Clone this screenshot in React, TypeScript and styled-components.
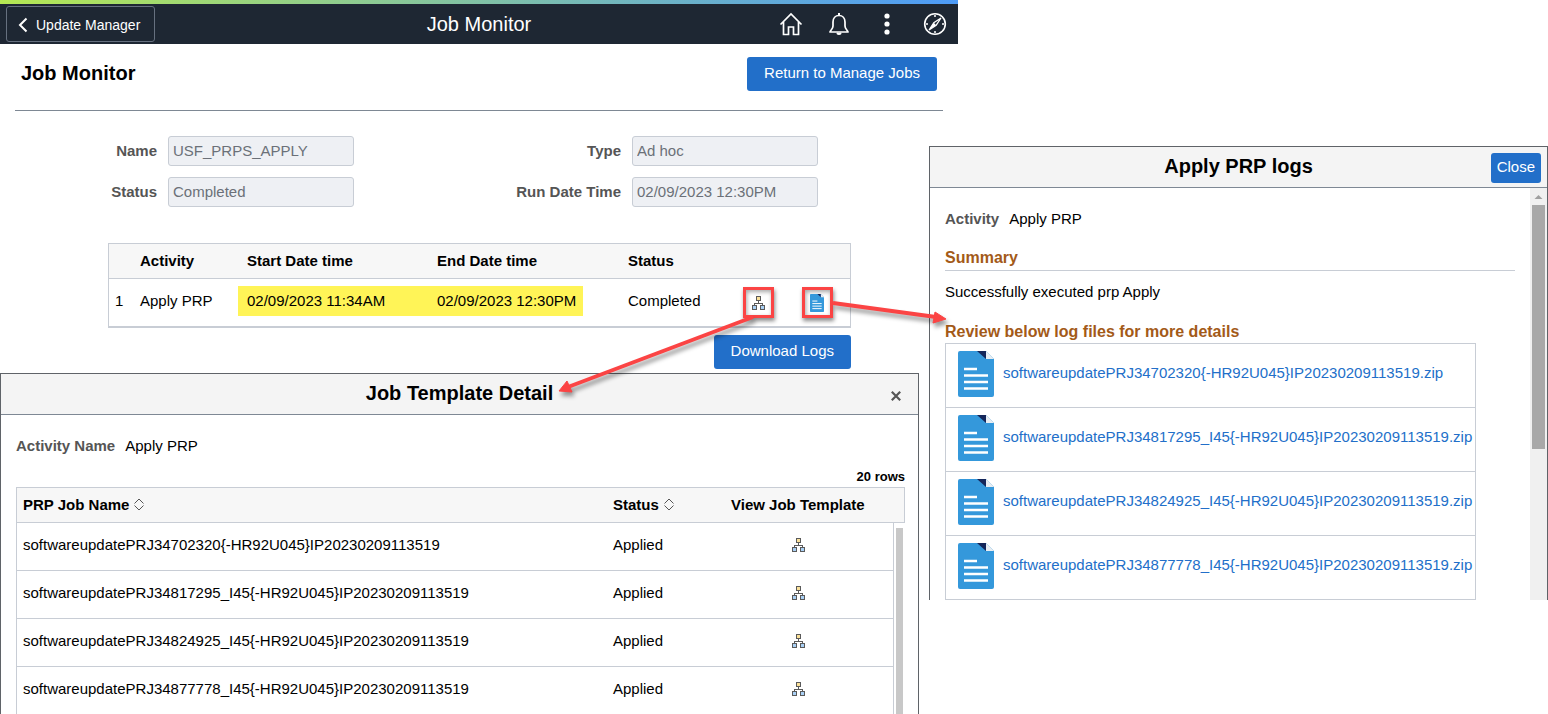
import React from 'react';
import styled, { createGlobalStyle } from 'styled-components';

const GlobalStyle = createGlobalStyle`
  *, *::before, *::after { box-sizing: border-box; }
  body {
    margin: 0;
    background: #fff;
    color: #000;
    font-family: "Liberation Sans", Arial, sans-serif;
    font-size: 15px;
    line-height: 20px;
  }
  button, input { font: inherit; }
  h1, h2, h3, p { margin: 0; }
`;

const RED = '#fb4444';

const Page = styled.div`
  display: grid;
  grid-template-columns: minmax(0, 929fr) 29px minmax(0, 590fr);
  align-items: start;
  overflow: hidden;
`;

const Main = styled.main`
  grid-row: 1;
  grid-column: 1 / 3;
`;

const Accent = styled.div`
  height: 4px;
  background: linear-gradient(90deg, #b5e853, #4d9bf8);
`;

const Banner = styled.header`
  display: grid;
  grid-template-columns: 1fr auto 1fr;
  align-items: center;
  height: 40px;
  background: #1e2733;
  color: #fff;
`;

const BackButton = styled.button`
  display: flex;
  align-items: center;
  justify-self: start;
  gap: 8px;
  height: 36px;
  margin-left: 6px;
  padding: 2px 14px 0 11px;
  border: 1px solid #66707f;
  border-radius: 3px;
  background: transparent;
  color: #fff;
  font-size: 14px;
`;

const BannerTitle = styled.h1`
  font-size: 20px;
  font-weight: 400;
  line-height: 24px;
`;

const Tools = styled.nav`
  display: flex;
  justify-content: flex-end;
`;

const ToolButton = styled.button`
  display: grid;
  place-items: center;
  width: 48px;
  height: 40px;
  padding: 0 0 0 1px;
  border: 0;
  background: transparent;
  color: #fff;
`;

const TitleRow = styled.div`
  display: flex;
  justify-content: space-between;
  align-items: flex-start;
  height: 67px;
  margin: 0 15px;
  padding: 13px 6px 0;
  border-bottom: 1px solid #7e8894;
`;

const PageTitle = styled.h2`
  font-size: 20px;
  line-height: 32px;
`;

const PrimaryButton = styled.button<{ $compact?: boolean }>`
  height: ${(p) => (p.$compact ? 30 : 34)}px;
  padding: 0 ${(p) => (p.$compact ? 6 : 17)}px 2px;
  border: 0;
  border-radius: 3px;
  background: #226fc9;
  color: #fff;
  white-space: nowrap;
`;

const Form = styled.form`
  display: grid;
  grid-template-columns: 157fr 186fr 256fr 186fr 129fr;
  gap: 11px;
  align-items: center;
  margin-top: 25px;
`;

const FieldLabel = styled.label<{ $first?: boolean }>`
  grid-column-start: ${(p) => (p.$first ? 1 : 'auto')};
  color: #555;
  font-weight: 700;
  text-align: right;
  white-space: nowrap;
`;

const Field = styled.input`
  width: 100%;
  min-width: 0;
  height: 30px;
  padding: 0 4px 1px;
  border: 1px solid #c8cdd5;
  border-radius: 3px;
  background: #eef0f4;
  color: #6b7078;
`;

const ActivityArea = styled.div`
  display: flex;
  flex-direction: column;
  align-items: flex-end;
  gap: 7px;
  margin: 36px 107px 0 108px;
`;

const ActivityTable = styled.table`
  width: 100%;
  table-layout: fixed;
  border: 1px solid #c8cdd5;
  border-bottom-width: 2px;
  border-spacing: 0;
  th, td {
    padding: 0;
    text-align: left;
    white-space: nowrap;
  }
  th {
    height: 35px;
    padding-left: 9px;
    border-bottom: 1px solid #c8cdd5;
    background: #f7f7f7;
  }
  td { height: 47px; }
  td:last-child { padding-right: 8px; }
`;

const CellText = styled.span<{ $tight?: boolean }>`
  display: block;
  padding: 0 0 4px ${(p) => (p.$tight ? 6 : 9)}px;
`;

const Highlight = styled.span<{ $end?: boolean }>`
  display: block;
  width: ${(p) => (p.$end ? '155px' : 'auto')};
  height: 30px;
  margin-bottom: 4px;
  padding-left: 9px;
  background: #fff457;
  line-height: 30px;
`;

const MarkedButton = styled.button`
  position: relative;
  display: grid;
  place-items: center;
  width: 31px;
  height: 31px;
  margin: 0 auto;
  padding: 0;
  border: 3px solid ${RED};
  background: #fff;
  box-shadow: 1px 3px 4px rgba(0, 0, 0, 0.45), inset 1px 2px 4px rgba(0, 0, 0, 0.35);
`;

const Callout = styled.svg`
  position: absolute;
  z-index: 5;
  top: -3px;
  left: -3px;
  overflow: visible;
  pointer-events: none;
  filter: drop-shadow(2px 4px 2px rgba(0, 0, 0, 0.4));
`;

const Dialog = styled.section<{ $logs?: boolean }>`
  position: relative;
  border: 1px solid #5f6368;
  border-bottom: 0;
  background: #fff;
  ${(p) => (p.$logs ? 'grid-row: 1; grid-column: 2 / 4; margin-top: 146px;' : 'margin: 4px 39px 0 0;')}
`;

const DialogHeader = styled.header`
  display: grid;
  grid-template-columns: 1fr auto 1fr;
  align-items: center;
  height: 41px;
  padding: 0 6px;
  border-bottom: 1px solid #7e8894;
  background: #f4f4f4;
`;

const DialogTitle = styled.h2`
  grid-column: 2;
  padding-bottom: 2px;
  font-size: 20px;
  line-height: 24px;
`;

const HeaderAction = styled.div`
  display: flex;
  justify-content: flex-end;
  padding-top: 2px;
`;

const IconButton = styled.button`
  display: inline-grid;
  place-items: center;
  padding: 0;
  border: 0;
  background: transparent;
  color: #555;
`;

const CloseIconButton = styled(IconButton)`
  width: 32px;
  height: 32px;
  padding-top: 2px;
`;

const TemplateBody = styled.div`
  padding: 21px 13px 0 15px;
`;

const Pair = styled.p`
  display: flex;
  gap: 10px;
`;

const PairName = styled.span`
  color: #555;
  font-weight: 700;
`;

const RowCount = styled.p`
  margin-top: 11px;
  font-size: 13px;
  font-weight: 700;
  text-align: right;
`;

const TemplateTable = styled.table`
  width: 100%;
  table-layout: fixed;
  border-spacing: 0;
  th, td {
    padding: 0 0 0 6px;
    border-bottom: 1px solid #c8cdd5;
    text-align: left;
    white-space: nowrap;
  }
  th {
    height: 36px;
    border-top: 1px solid #c8cdd5;
    background: #f7f7f7;
  }
  th:first-child, td:first-child { border-left: 1px solid #c8cdd5; }
  th:last-child { border-right: 1px solid #c8cdd5; }
  td { height: 48px; padding-bottom: 4px; }
  tbody tr:last-child td { border-bottom: 0; }
`;

const IconCell = styled.td`
  && {
    padding: 0 22px 0 0;
    border-right: 1px solid #c8cdd5;
    text-align: center;
  }
`;

const ScrollCell = styled.td`
  && {
    padding: 5px 2px 0;
    border: 0;
    background: #c8c8c8;
    background-clip: content-box;
  }
`;

const SortButton = styled(IconButton)`
  margin-left: 5px;
  vertical-align: -1px;
`;

const LogsMain = styled.div`
  display: grid;
  grid-template-columns: minmax(0, 1fr) 17px;
  height: 412px;
  overflow: hidden;
`;

const LogsBody = styled.div`
  padding: 21px 15px 0;
`;

const SectionTitle = styled.h3<{ $ruled?: boolean }>`
  margin-top: ${(p) => (p.$ruled ? 19 : 20)}px;
  padding-bottom: ${(p) => (p.$ruled ? 2 : 1)}px;
  border-bottom: ${(p) => (p.$ruled ? '1px solid #c8cdd5' : '0')};
  color: #a35a18;
  font-size: 16px;
`;

const Message = styled.p`
  margin-top: 11px;
`;

const LogTable = styled.table`
  border: 1px solid #c8cdd5;
  border-bottom: 0;
  border-spacing: 0;
  td {
    height: 64px;
    padding: 0 9px 3px 12px;
    border-bottom: 1px solid #c8cdd5;
    white-space: nowrap;
  }
  td + td { padding: 0 3px 5px 0; }
`;

const LogLink = styled.a`
  color: #226fc9;
  text-decoration: none;
`;

const ScrollTrack = styled.div`
  display: flex;
  flex-direction: column;
  align-items: center;
  background: #f0f0f0;
`;

const ScrollThumb = styled.div`
  width: 13px;
  height: 244px;
  margin-top: 5px;
  background: #a8a8a8;
`;

const BlockSvg = styled.svg`
  display: block;
`;

const HierarchyIcon = () => (
  <BlockSvg width="13" height="14" viewBox="0 0 13 14" fill="none" stroke="#5a5a5a" shapeRendering="crispEdges">
    <path d="M6.5 5v3M2.5 9V7.5h8V9" />
    <rect x="4.5" y="0.5" width="4" height="4" fill="#fbe19a" />
    <rect x="0.5" y="9.5" width="4" height="4" fill="#a9d0f5" />
    <rect x="8.5" y="9.5" width="4" height="4" fill="#a9d0f5" />
  </BlockSvg>
);

const DocIcon = ({ width, height }: { width: number; height: number }) => (
  <BlockSvg width={width} height={height} viewBox="0 0 36 46">
    <path d="M2 0H28L36 8V44a2 2 0 0 1-2 2H2a2 2 0 0 1-2-2V2A2 2 0 0 1 2 0Z" fill="#3498db" />
    <path d="M19 0h9v8Z" fill="#14265a" />
    <path d="M28 0l8 8h-8Z" fill="#e8edf2" />
    <path d="M6 18h13M6 24.500h24M6 31h24M6 37.500h24" stroke="#fff" strokeWidth="2.500" />
  </BlockSvg>
);

const SortIcon = () => (
  <BlockSvg width="10" height="13" viewBox="0 0 10 13" fill="none" stroke="currentColor">
    <path d="M0.500 5.500L5 1L9.500 5.500M0.500 7.500L5 12L9.500 7.500" />
  </BlockSvg>
);

const jobs = [
  'softwareupdatePRJ34702320{-HR92U045}IP20230209113519',
  'softwareupdatePRJ34817295_I45{-HR92U045}IP20230209113519',
  'softwareupdatePRJ34824925_I45{-HR92U045}IP20230209113519',
  'softwareupdatePRJ34877778_I45{-HR92U045}IP20230209113519',
];

const fields = [
  { id: 'name', label: 'Name', value: 'USF_PRPS_APPLY' },
  { id: 'type', label: 'Type', value: 'Ad hoc' },
  { id: 'status', label: 'Status', value: 'Completed' },
  { id: 'run', label: 'Run Date Time', value: '02/09/2023 12:30PM' },
];

const MonitorBanner = () => (
  <>
    <Accent />
    <Banner>
      <BackButton type="button">
        <svg width="10" height="16" viewBox="0 0 10 16" fill="none" stroke="#fff" strokeWidth="2">
          <path d="M8.500 1.500L2 8l6.500 6.500" />
        </svg>
        Update Manager
      </BackButton>
      <BannerTitle>Job Monitor</BannerTitle>
      <Tools aria-label="Global actions">
        <ToolButton type="button" aria-label="Home">
          <svg width="24" height="24" viewBox="0 0 24 24" fill="none" stroke="#fff" strokeWidth="1.700">
            <path d="M1.500 12.500L12 2l10.500 10.500M4.500 10v12.500h5V15h5v7.500h5V10" />
          </svg>
        </ToolButton>
        <ToolButton type="button" aria-label="Notifications">
          <svg width="22" height="24" viewBox="0 0 22 24" fill="none" stroke="#fff" strokeWidth="1.700">
            <path d="M2 20h18c0-1.500-3-2.500-3-6V10c0-4-2.500-6.500-6-6.500S5 6 5 10v4c0 3.500-3 4.500-3 6Z" strokeLinejoin="round" />
            <path d="M11 1v2M9 21q2 2 4 0" strokeWidth="2" />
          </svg>
        </ToolButton>
        <ToolButton type="button" aria-label="Actions">
          <svg width="6" height="22" viewBox="0 0 6 22" fill="#fff">
            <circle cx="3" cy="3" r="2.600" />
            <circle cx="3" cy="11" r="2.600" />
            <circle cx="3" cy="19" r="2.600" />
          </svg>
        </ToolButton>
        <ToolButton type="button" aria-label="Navigator">
          <svg width="24" height="24" viewBox="0 0 24 24" fill="none" stroke="#fff" strokeWidth="1.600">
            <circle cx="12" cy="12" r="10.300" />
            <path d="M12 3v2M12 19v2M3 12h2M19 12h2" strokeWidth="1.500" />
            <path d="M18 6L13.200 13.200 6 18 10.800 10.800Z" strokeWidth="1.200" />
            <path d="M10.800 10.800L13.200 13.200 6 18Z" fill="#fff" stroke="none" />
          </svg>
        </ToolButton>
      </Tools>
    </Banner>
  </>
);

const ActivityGrid = () => (
  <ActivityArea>
    <ActivityTable>
      <colgroup>
        <col width="22" />
        <col width="107" />
        <col width="190" />
        <col width="191" />
        <col width="105" />
        <col width="68" />
        <col width="58" />
      </colgroup>
      <thead>
        <tr>
          <th aria-label="Row" />
          <th>Activity</th>
          <th>Start Date time</th>
          <th>End Date time</th>
          <th colSpan={3}>Status</th>
        </tr>
      </thead>
      <tbody>
        <tr>
          <td><CellText $tight>1</CellText></td>
          <td><CellText>Apply PRP</CellText></td>
          <td><Highlight>02/09/2023 11:34AM</Highlight></td>
          <td><Highlight $end>02/09/2023 12:30PM</Highlight></td>
          <td><CellText>Completed</CellText></td>
          <td>
            <MarkedButton type="button" aria-label="Job template detail">
              <HierarchyIcon />
              <Callout width="31" height="31" viewBox="0 0 31 31">
                <path d="M10 30L-175 100" stroke={RED} strokeWidth="4" />
                <path d="M-184 104L-176 94L-171 105Z" fill={RED} stroke={RED} />
              </Callout>
            </MarkedButton>
          </td>
          <td>
            <MarkedButton type="button" aria-label="Log files">
              <DocIcon width={14} height={18} />
              <Callout width="31" height="31" viewBox="0 0 31 31">
                <path d="M31 16L134 30" stroke={RED} strokeWidth="4" />
                <path d="M144 32L133 25L131 36Z" fill={RED} stroke={RED} />
              </Callout>
            </MarkedButton>
          </td>
        </tr>
      </tbody>
    </ActivityTable>
    <PrimaryButton type="button">Download Logs</PrimaryButton>
  </ActivityArea>
);

const TemplateDialog = () => (
  <Dialog aria-label="Job Template Detail">
    <DialogHeader>
      <DialogTitle>Job Template Detail</DialogTitle>
      <HeaderAction>
        <CloseIconButton type="button" aria-label="Close">
          <svg width="10" height="10" viewBox="0 0 10 10" stroke="currentColor" strokeWidth="2.200">
            <path d="M0.800 0.800L9.200 9.200M9.200 0.800L0.800 9.200" />
          </svg>
        </CloseIconButton>
      </HeaderAction>
    </DialogHeader>
    <TemplateBody>
      <Pair><PairName>Activity Name</PairName>Apply PRP</Pair>
      <RowCount>20 rows</RowCount>
      <TemplateTable>
        <colgroup>
          <col />
          <col width="118" />
          <col width="169" />
          <col width="11" />
        </colgroup>
        <thead>
          <tr>
            <th>PRP Job Name<SortButton type="button" aria-label="Sort by name"><SortIcon /></SortButton></th>
            <th>Status<SortButton type="button" aria-label="Sort by status"><SortIcon /></SortButton></th>
            <th colSpan={2}>View Job Template</th>
          </tr>
        </thead>
        <tbody>
          {jobs.map((job, i) => (
            <tr key={job}>
              <td>{job}</td>
              <td>Applied</td>
              <IconCell>
                <IconButton type="button" aria-label="View job template"><HierarchyIcon /></IconButton>
              </IconCell>
              {i === 0 && <ScrollCell rowSpan={jobs.length} />}
            </tr>
          ))}
        </tbody>
      </TemplateTable>
    </TemplateBody>
  </Dialog>
);

const LogsDialog = () => (
  <Dialog $logs aria-label="Apply PRP logs">
    <DialogHeader>
      <DialogTitle>Apply PRP logs</DialogTitle>
      <HeaderAction>
        <PrimaryButton type="button" $compact>Close</PrimaryButton>
      </HeaderAction>
    </DialogHeader>
    <LogsMain>
      <LogsBody>
        <Pair><PairName>Activity</PairName>Apply PRP</Pair>
        <SectionTitle $ruled>Summary</SectionTitle>
        <Message>Successfully executed prp Apply</Message>
        <SectionTitle>Review below log files for more details</SectionTitle>
        <LogTable>
          <tbody>
            {jobs.map((job) => (
              <tr key={job}>
                <td><DocIcon width={36} height={46} /></td>
                <td><LogLink href="#">{job}.zip</LogLink></td>
              </tr>
            ))}
          </tbody>
        </LogTable>
      </LogsBody>
      <ScrollTrack aria-hidden="true">
        <svg width="9" height="12" viewBox="0 0 9 12">
          <path d="M0.500 11L4.500 7L8.500 11Z" fill="#a0a0a0" />
        </svg>
        <ScrollThumb />
      </ScrollTrack>
    </LogsMain>
  </Dialog>
);

export default function App() {
  return (
    <Page>
      <GlobalStyle />
      <Main>
        <MonitorBanner />
        <TitleRow>
          <PageTitle>Job Monitor</PageTitle>
          <PrimaryButton type="button">Return to Manage Jobs</PrimaryButton>
        </TitleRow>
        <Form>
          {fields.map((f, i) => (
            <React.Fragment key={f.id}>
              <FieldLabel htmlFor={f.id} $first={i % 2 === 0}>{f.label}</FieldLabel>
              <Field id={f.id} value={f.value} readOnly />
            </React.Fragment>
          ))}
        </Form>
        <ActivityGrid />
        <TemplateDialog />
      </Main>
      <LogsDialog />
    </Page>
  );
}
